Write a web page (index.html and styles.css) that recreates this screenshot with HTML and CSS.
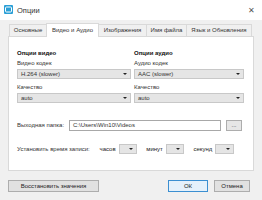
FILE: index.html
```html
<!DOCTYPE html>
<html>
<head>
<meta charset="utf-8">
<link rel="stylesheet" href="styles.css">
</head>
<body>
<div class="window">
  <div class="titlebar">
    <svg class="appicon" width="9" height="9" viewBox="0 0 9 9"><rect x="0" y="0" width="9" height="9" rx="1" fill="#2a9fd6"/><rect x="1.5" y="2" width="6" height="5" rx="1" fill="none" stroke="#fff" stroke-width="1"/></svg>
    <span class="title">Опции</span>
    <span class="close">✕</span>
  </div>
  <div class="body">
    <div class="tabs">
      <div class="tab t1">Основные</div>
      <div class="tab t2 active">Видео и Аудио</div>
      <div class="tab t3">Изображения</div>
      <div class="tab t4">Имя файла</div>
      <div class="tab t5">Язык и Обновления</div>
    </div>
    <div class="panel">
      <div class="cols">
        <div class="col">
          <div class="heading">Опции видео</div>
          <div class="label">Видео кодек</div>
          <div class="select"><span>H.264 (slower)</span><i class="arrow"></i></div>
          <div class="label">Качество</div>
          <div class="select"><span>auto</span><i class="arrow"></i></div>
        </div>
        <div class="col">
          <div class="heading">Опции аудио</div>
          <div class="label">Аудио кодек</div>
          <div class="select"><span>AAC (slower)</span><i class="arrow"></i></div>
          <div class="label">Качество</div>
          <div class="select"><span>auto</span><i class="arrow"></i></div>
        </div>
      </div>
      <div class="outrow">
        <span class="rowlabel">Выходная папка:</span>
        <div class="input">C:\Users\Win10\Videos</div>
        <div class="browse">...</div>
      </div>
      <div class="timerow">
        <span class="rowlabel">Установить время записи:</span>
        <span class="unit">часов</span>
        <div class="select small"><span></span><i class="arrow"></i></div>
        <span class="unit">минут</span>
        <div class="select small"><span></span><i class="arrow"></i></div>
        <span class="unit">секунд</span>
        <div class="select small"><span></span><i class="arrow"></i></div>
      </div>
    </div>
    <div class="footer">
      <div class="btn restore">Восстановить значения</div>
      <div class="spacer"></div>
      <div class="btn ok">ОК</div>
      <div class="btn cancel">Отмена</div>
    </div>
  </div>
</div>
</body>
</html>
```
FILE: styles.css
```css
* { box-sizing: border-box; }
html, body { margin: 0; padding: 0; }
body {
  font-family: "Liberation Sans", Arial, sans-serif;
  font-size: 6px;
  color: #222;
}
.window {
  width: 262px;
  height: 200px;
  background: #f0f0f0;
  display: flex;
  flex-direction: column;
  overflow: hidden;
}
.titlebar {
  height: 20px;
  background: #fff;
  display: flex;
  align-items: center;
  padding: 0 4px;
}
.appicon { margin-right: 4px; margin-top: -1px; }
.title { font-size: 7.5px; color: #333; }
.close { margin-left: auto; font-size: 8px; color: #555; margin-right: 3px; }
.body {
  flex: 1;
  padding: 2px 8px 0 8px;
  display: flex;
  flex-direction: column;
}
.tabs {
  display: flex;
  height: 14px;
  align-items: flex-end;
  padding-left: 1px;
}
.tab {
  height: 12px;
  line-height: 11px;
  border: 1px solid #d9d9d9;
  border-bottom: none;
  background: #f0f0f0;
  margin-right: -1px;
  color: #333;
  white-space: nowrap;
  text-align: center;
  flex: none;
}
.t1 { width: 38px; }
.t2 { width: 53px; }
.t3 { width: 49px; }
.t4 { width: 41px; }
.t5 { width: 66px; }
.tab.active {
  height: 14px;
  line-height: 13px;
  background: #fff;
  position: relative;
  z-index: 1;
  margin-bottom: -1px;
}
.panel {
  height: 135px;
  background: #fff;
  border: 1px solid #d9d9d9;
  padding: 11px 10px 0 8px;
  display: flex;
  flex-direction: column;
}
.cols {
  display: grid;
  grid-template-columns: 114px 110px;
  column-gap: 3px;
}
.heading { font-weight: bold; height: 10px; line-height: 10px; color: #111; }
.label { height: 9px; line-height: 9px; margin-top: 1px; color: #333; }
.select {
  height: 10px;
  background: #e5e5e5;
  border: 1px solid #c8c8c8;
  display: flex;
  align-items: center;
  padding: 0 3px 0 3px;
  margin-top: 1px;
  margin-bottom: 4px;
}
.select span { flex: 1; color: #333; }
.arrow {
  width: 0; height: 0;
  border-left: 2px solid transparent;
  border-right: 2px solid transparent;
  border-top: 2.5px solid #222;
}
.outrow {
  display: flex;
  align-items: center;
  margin-top: 12px;
  height: 12px;
}
.rowlabel { color: #333; }
.outrow .rowlabel { width: 52px; }
.input {
  width: 152px;
  height: 11px;
  line-height: 9px;
  border: 1px solid #a8a8a8;
  padding: 0 3px;
  color: #333;
}
.browse {
  width: 16px;
  height: 11px;
  line-height: 8px;
  margin-left: 5px;
  border: 1px solid #adadad;
  background: #e6e6e6;
  text-align: center;
  color: #333;
}
.timerow {
  display: flex;
  align-items: center;
  margin-top: 12px;
  height: 12px;
}
.timerow .rowlabel { width: 85px; }
.unit { margin-right: 3px; }
.select.small {
  width: 19px;
  margin: 0 9px 0 0;
  padding: 0 3px 0 3px;
}
.footer {
  display: flex;
  align-items: center;
  margin-top: 8px;
  height: 13px;
}
.btn {
  height: 12px;
  line-height: 10px;
  border: 1px solid #adadad;
  background: #e1e1e1;
  text-align: center;
  color: #222;
}
.restore { width: 91px; }
.spacer { flex: 1; }
.ok { width: 40px; border-color: #3c8fd1; background: #e5f1fb; margin-right: 6px; }
.cancel { width: 36px; margin-right: 4px; }
```
